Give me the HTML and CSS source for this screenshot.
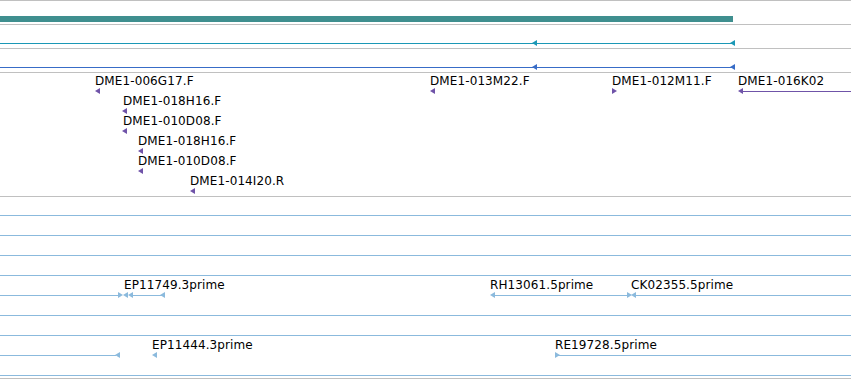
FILE: index.html
```html
<!DOCTYPE html>
<html lang="en">
<head>
    <meta charset="UTF-8">
    <title>Tracks</title>
    <link rel="stylesheet" href="styles.css">
</head>
<body>
<div class="view">

    <!-- gene -->
    <div class="track short gene">
        <div class="bar" style="left:0;width:733px"></div>
    </div>

    <!-- transcripts -->
    <div class="track short cdna">
        <div class="ln" style="left:0;width:735px"></div>
        <span class="tri l" style="left:532px"></span>
        <span class="tri l" style="left:730px"></span>
    </div>
    <div class="track short prot">
        <div class="ln" style="left:0;width:735px"></div>
        <span class="tri l" style="left:532px"></span>
        <span class="tri l" style="left:730px"></span>
    </div>

    <!-- BAC ends -->
    <div class="track bac">
        <div class="row">
            <span class="lbl" style="left:95px">DME1-006G17.F</span>
            <span class="tri l sm" style="left:95px"></span>
            <span class="lbl" style="left:430px">DME1-013M22.F</span>
            <span class="tri l sm" style="left:430px"></span>
            <span class="lbl" style="left:612px">DME1-012M11.F</span>
            <span class="tri r sm" style="left:612px"></span>
            <span class="lbl" style="left:738px">DME1-016K02</span>
            <span class="tri l sm" style="left:738px"></span>
            <div class="ln" style="left:742px;width:109px"></div>
        </div>
        <div class="row">
            <span class="lbl" style="left:123px">DME1-018H16.F</span>
            <span class="tri l sm" style="left:122px"></span>
        </div>
        <div class="row">
            <span class="lbl" style="left:123px">DME1-010D08.F</span>
            <span class="tri l sm" style="left:122px"></span>
        </div>
        <div class="row">
            <span class="lbl" style="left:138px">DME1-018H16.F</span>
            <span class="tri l sm" style="left:138px"></span>
        </div>
        <div class="row">
            <span class="lbl" style="left:138px">DME1-010D08.F</span>
            <span class="tri l sm" style="left:138px"></span>
        </div>
        <div class="row">
            <span class="lbl" style="left:190px">DME1-014I20.R</span>
            <span class="tri l sm" style="left:190px"></span>
        </div>
    </div>

    <!-- ESTs -->
    <div class="track est">
        <div class="row"><div class="ln full"></div></div>
        <div class="row"><div class="ln full"></div></div>
        <div class="row"><div class="ln full"></div></div>
        <div class="row"><div class="ln full"></div></div>
        <div class="row">
            <div class="ln" style="left:0;width:118px"></div>
            <span class="tri r" style="left:118px"></span>
            <span class="tri l" style="left:123px"></span>
            <span class="tri l" style="left:128px"></span>
            <div class="ln" style="left:133px;width:29px"></div>
            <span class="tri l" style="left:160px"></span>
            <span class="lbl" style="left:124px">EP11749.3prime</span>

            <span class="tri l" style="left:490px"></span>
            <div class="ln" style="left:494px;width:134px"></div>
            <span class="tri r" style="left:627px"></span>
            <span class="tri l" style="left:631px"></span>
            <div class="ln" style="left:635px;width:216px"></div>
            <span class="lbl" style="left:490px">RH13061.5prime</span>
            <span class="lbl" style="left:631px">CK02355.5prime</span>
        </div>
        <div class="row"><div class="ln full"></div></div>
        <div class="row"><div class="ln full"></div></div>
        <div class="row">
            <div class="ln" style="left:0;width:116px"></div>
            <span class="tri l" style="left:115px"></span>
            <span class="tri l" style="left:152px"></span>
            <span class="lbl" style="left:152px">EP11444.3prime</span>

            <span class="tri r sm" style="left:555px"></span>
            <div class="ln" style="left:557px;width:294px"></div>
            <span class="lbl" style="left:555px">RE19728.5prime</span>
        </div>
        <div class="row"><div class="ln full"></div></div>
    </div>
    <div class="track end"></div>

</div>
</body>
</html>
```

FILE: styles.css
```css
*{
    box-sizing: border-box;
    margin:0;
    padding:0;
}
body{
    background:#fff;
    font-family:"DejaVu Sans", "Liberation Sans", sans-serif;
    font-size:12px;
    color:#000;
    overflow:hidden;
}
.view{
    width:851px;
}
.track{
    position:relative;
    border-top:1px solid #c0c0c0;
}
.track.short{
    height:24px;
}
.track.bac{
    height:124px;
    padding-bottom:3px;
    color:#6f53a8;
}
.track.est{
    height:182px;
    padding-bottom:1px;
    color:#8bbadd;
}
.gene{
    color:#3f8f8f;
}
.cdna{
    color:#1b98b6;
}
.prot{
    color:#386cc7;
}
.row{
    position:relative;
    height:20px;
}
.bar{
    position:absolute;
    top:15px;
    height:6px;
    background:currentColor;
}
.ln{
    position:absolute;
    top:18px;
    height:1px;
    background:currentColor;
}
.ln.full{
    left:0;
    width:100%;
}
.tri{
    position:absolute;
    top:15px;
    width:0;
    height:0;
    border-top:3.5px solid transparent;
    border-bottom:3.5px solid transparent;
}
.tri.l{
    border-right:5px solid currentColor;
}
.tri.r{
    border-left:5px solid currentColor;
}
.tri.sm{
    top:15px;
    border-top-width:3px;
    border-bottom-width:3px;
}
.lbl{
    position:absolute;
    top:1px;
    line-height:14px;
    white-space:nowrap;
    letter-spacing:0.1px;
    color:#000;
}
```
